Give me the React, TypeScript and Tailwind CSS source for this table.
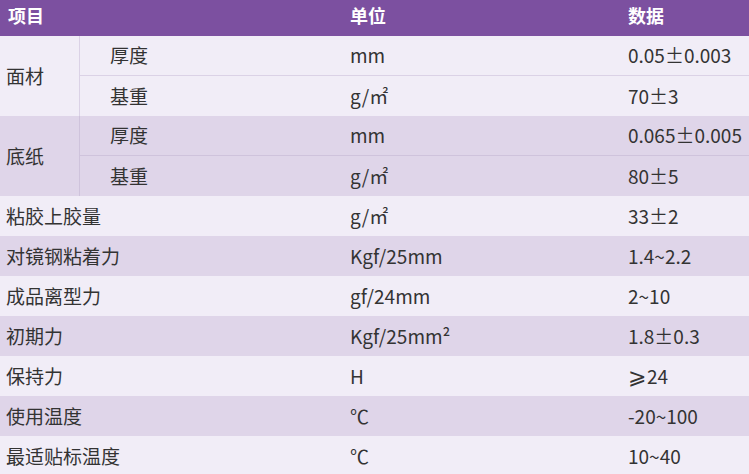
const subGroups = [
  {
    name: "面材",
    dark: false,
    items: [
      { label: "厚度", unit: "mm", value: "0.05±0.003" },
      { label: "基重", unit: "g/㎡", value: "70±3" },
    ],
  },
  {
    name: "底纸",
    dark: true,
    items: [
      { label: "厚度", unit: "mm", value: "0.065±0.005" },
      { label: "基重", unit: "g/㎡", value: "80±5" },
    ],
  },
];

const rows = [
  { name: "粘胶上胶量", unit: "g/㎡", value: "33±2" },
  { name: "对镜钢粘着力", unit: "Kgf/25mm", value: "1.4~2.2" },
  { name: "成品离型力", unit: "gf/24mm", value: "2~10" },
  { name: "初期力", unit: "Kgf/25mm²", value: "1.8±0.3" },
  { name: "保持力", unit: "H", value: "geq" },
  { name: "使用温度", unit: "℃", value: "-20~100" },
  { name: "最适贴标温度", unit: "℃", value: "10~40" },
];

const Value = ({ v }: { v: string }) =>
  v === "geq" ? (
    <span>
      <span className="inline-block w-[19px] text-[22px] leading-none">⩾</span>24
    </span>
  ) : (
    <span>{v}</span>
  );

const App = () => {
  return (
    <div className="w-[749px] h-[474px] overflow-hidden font-['Noto_Sans_CJK_SC',sans-serif] text-[19px] text-[#333]">
      <div className="flex h-9 items-center bg-[#7c50a0] pb-[5px] text-[18px] font-bold text-white">
        <div className="w-[350px] pl-2">项目</div>
        <div className="w-[278px]">单位</div>
        <div className="flex-1">数据</div>
      </div>

      {subGroups.map((g) => (
        <div
          key={g.name}
          className={`flex ${g.dark ? "bg-[#dfd5e9]" : "bg-[#f1edf7]"}`}
        >
          <div
            className={`flex w-[80px] items-center border-r pl-[6px] ${
              g.dark ? "border-[#cfc3dc]" : "border-[#dbd2e6]"
            }`}
          >
            {g.name}
          </div>
          <div className="flex-1">
            {g.items.map((it, i) => (
              <div
                key={it.label}
                className={`flex h-10 items-center ${
                  i === 0
                    ? g.dark
                      ? "border-b border-[#cfc3dc]"
                      : "border-b border-[#dbd2e6]"
                    : ""
                }`}
              >
                <div className="w-[270px] pl-[30px]">{it.label}</div>
                <div className="w-[278px]">{it.unit}</div>
                <div className="flex-1">
                  <Value v={it.value} />
                </div>
              </div>
            ))}
          </div>
        </div>
      ))}

      {rows.map((r, i) => (
        <div
          key={r.name}
          className={`flex h-10 items-center ${
            i % 2 === 1 ? "bg-[#dfd5e9]" : "bg-[#f1edf7]"
          }`}
        >
          <div className="w-[350px] pl-[6px]">{r.name}</div>
          <div className="w-[278px]">{r.unit}</div>
          <div className="flex-1">
            <Value v={r.value} />
          </div>
        </div>
      ))}
    </div>
  );
};

export default App;
